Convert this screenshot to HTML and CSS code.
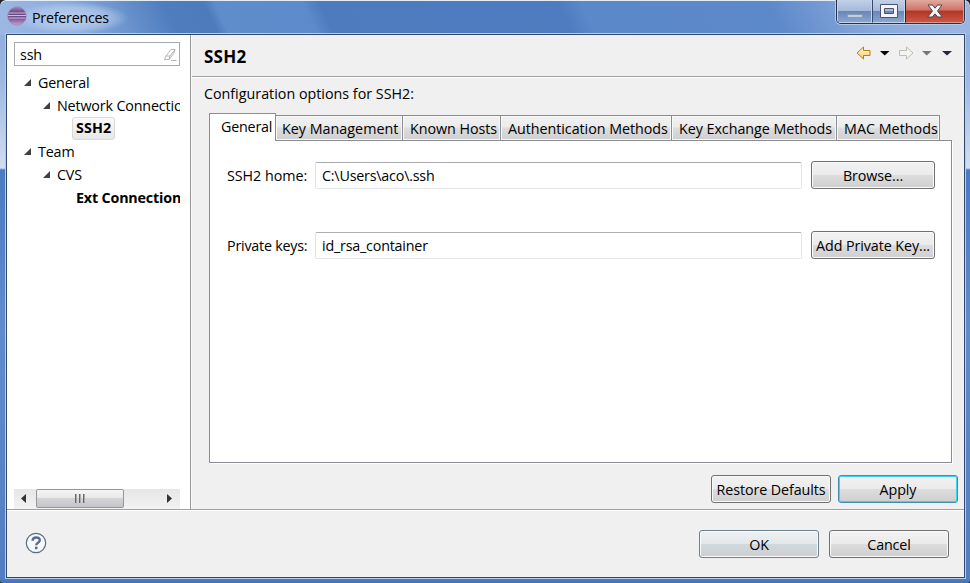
FILE: index.html
```
<!DOCTYPE html>
<html lang="en">
<head>
<meta charset="utf-8">
<title>Preferences</title>
<link rel="stylesheet" href="styles.css">
</head>
<body>
<div class="window">
  <header class="titlebar">
    <svg class="logo" width="20" height="20" viewBox="0 0 20 20"><defs><linearGradient id="orb" x1="0" y1="0" x2="0" y2="1"><stop offset="0" stop-color="#a58bbd"/><stop offset=".3" stop-color="#674785"/><stop offset=".6" stop-color="#704c8e"/><stop offset="1" stop-color="#c4a5d2"/></linearGradient></defs><circle cx="10" cy="10" r="9.200" fill="url(#orb)" stroke="#9c84b5" stroke-width=".7"/><path d="M2 7h16M1 9.500h18M2 12h16" stroke="#d8c8e4" stroke-width=".9"/></svg>
    <span class="title">Preferences</span>
    <div class="controls">
      <span class="ctl min"><svg width="18" height="16" viewBox="0 0 18 16"><rect x="1.500" y="11.500" width="15" height="3" fill="#c3cddd" stroke="#8a9ab5"/></svg></span>
      <span class="ctl max"><svg width="18" height="16" viewBox="0 0 18 16"><path fill-rule="evenodd" d="M.5 1.500h17v13H.5zM4.500 5.500v5h9v-5z" fill="#f4f4f6" stroke="#4b5370"/></svg></span>
      <span class="ctl close"><svg width="18" height="16" viewBox="0 0 18 16"><path d="M2 2h4.500L9 5.200 11.500 2H16L11.500 8l4.800 6h-4.600L9 10.800 6.300 14H1.700l4.800-6z" fill="#f5f5f5" stroke="#4f4550"/></svg></span>
    </div>
  </header>
  <main class="client">
    <div class="upper">
      <aside class="side">
        <div class="search"><span>ssh</span><svg width="16" height="14" viewBox="0 0 16 14"><path d="M2.500 11.500 4 8l5-6.500h4L12 5l-5 6.500zM4 8h4l5-6.500M8 8l-1 3.500M9 12.500h5.500" fill="none" stroke="#b5b5b5"/></svg></div>
        <ul class="tree">
          <li class="l1"><i></i><span>General</span></li>
          <li class="l2"><i></i><span>Network Connectio</span></li>
          <li class="l3"><b class="selected">SSH2</b></li>
          <li class="l1"><i></i><span>Team</span></li>
          <li class="l2"><i></i><span>CVS</span></li>
          <li class="l3"><b class="ext">Ext Connection</b></li>
        </ul>
        <div class="scroll"><i class="left"></i><span class="thumb"><i></i><i></i><i></i></span><i class="right"></i></div>
      </aside>
      <section class="page">
        <div class="pagehead"><h1>SSH2</h1>
          <svg width="98" height="16" viewBox="0 0 98 16"><defs><linearGradient id="gold" x1="0" y1="0" x2="0" y2="1"><stop stop-color="#fffbe0"/><stop offset="1" stop-color="#f3cf63"/></linearGradient></defs><path d="M1 8 7.500 2v3.500h6.500v5H7.500V14z" fill="url(#gold)" stroke="#b97d17"/><path d="M24 6h9.500l-4.750 4.500z" fill="#000"/><path d="M57 8 50.500 2v3.500h-7v5h7V14z" fill="#f4f4f0" stroke="#bdbdb8"/><path d="M66 6h9.500l-4.750 4.500z" fill="#777"/><path d="M86 6h10l-5 4.500z" fill="#26263f"/></svg>
        </div>
        <div class="content">
          <p class="description">Configuration options for SSH2:</p>
          <nav class="tabs">
            <div class="tab active"><span>General</span></div><div class="tab km"><span>Key Management</span></div><div class="tab kh"><span>Known Hosts</span></div><div class="tab am"><span>Authentication Methods</span></div><div class="tab ke"><span>Key Exchange Methods</span></div><div class="tab mm"><span>MAC Methods</span></div>
          </nav>
          <div class="panel">
            <div class="row"><label class="home">SSH2 home:</label><div class="field"><span>C:\Users\aco\.ssh</span></div><div class="btn"><span>Browse...</span></div></div>
            <div class="row"><label class="keys">Private keys:</label><div class="field"><span>id_rsa_container</span></div><div class="btn"><span>Add Private Key...</span></div></div>
          </div>
          <div class="actions"><div class="btn"><span>Restore Defaults</span></div><div class="btn apply"><span>Apply</span></div></div>
        </div>
      </section>
    </div>
    <footer class="footer">
      <svg width="22" height="22" viewBox="0 0 22 22"><circle cx="11" cy="11" r="9.700" fill="#f7f8fa" stroke="#5a6b8c" stroke-width="1.200"/><path d="M7.600 8.800c0-4.300 7.200-4.400 7.200-.6 0 2.600-3.600 2.500-3.600 5" fill="none" stroke="#5a6b8c" stroke-width="2.400"/><rect x="9.900" y="14.700" width="2.600" height="2.500" fill="#5a6b8c"/></svg>
      <div class="dialog-buttons"><div class="btn ok"><span>OK</span></div><div class="btn"><span>Cancel</span></div></div>
    </footer>
  </main>
</div>
</body>
</html>
```
FILE: styles.css
```
* { box-sizing: border-box; }
body { margin: 0; width: 970px; height: 583px; overflow: hidden; background: #20242c; font: 14.3px/20px "Open Sans", "Noto Sans", sans-serif; color: #000; letter-spacing: -.15px; }
span, label, b { white-space: nowrap; }
.window {
  height: 583px; padding: 1px 4px 4px 6px; border-radius: 6px 6px 3px 3px; box-shadow: inset 0 1px #e4ecf7;
  background:
    linear-gradient(#4f7cc1, #4573b8) 0 579px / 100% 4px no-repeat,
    linear-gradient(65deg, #9db8e2 0, #8eadde 70px, #4f7ebf 160px, #4c7aba 198px, #5f8ccb 208px, #5d8aca 288px, #4d7bbe 303px, #4f7cc0 520px, #5b88c9 540px, #5d89ca 710px, #86a6da 790px, #9ab5e1 870px) 0 0 / 100% 35px no-repeat,
    linear-gradient(#88a7da 0, #9db8e2 80px, #d1def0 168px, #4b7ac0 170px, #608cce 330px, #527dc0 583px);
}
.titlebar { height: 33px; display: flex; align-items: center; padding-left: 1px; }
.logo { margin-top: -3px; position: relative; z-index: 1; }
.title { margin: 0 0 0 -15px; padding: 0 20px; height: 32px; line-height: 32px; letter-spacing: -.25px; background: radial-gradient(closest-side, #c4d6f0dd, #b4cbecaa 65%, transparent); }
.controls { margin: -1px 1px 0 auto; align-self: flex-start; display: flex; width: 129px; height: 24px; border: 1px solid #25314d; border-top: 0; border-radius: 0 0 5px 5px; overflow: hidden; box-shadow: 0 0 0 1px #b4cae9; }
.ctl { display: flex; justify-content: center; align-items: center; border: 1px solid #c7d5eb; border-top: 0; background: linear-gradient(#c3d1e7 0, #a5b9da 48%, #6686b7 50%, #8aa5cf); }
.min { width: 35px; } .max { width: 33px; border-left-color: #35486d; } .close { flex: 1; border-left-color: #4d1717; border-right-color: #d99a94; border-bottom-color: #d99a94; background: linear-gradient(#e0a99e, #cf7265 46%, #b33423 50%, #c95846); }
.client { height: 544px; width: 959px; border: 1px solid #2f496f; background: #f0f0f0; box-shadow: 0 0 0 1px #b4cdec; display: flex; flex-direction: column; }
.upper { display: flex; height: 475px; border-bottom: 1px solid #a0a0a0; }
.side { width: 184px; background: #fff; border-right: 1px solid #969696; padding: 7px 10px 0 7px; display: flex; flex-direction: column; overflow: hidden; }
.search { height: 24px; border: 1px solid #a6a8ad; display: flex; align-items: center; justify-content: space-between; padding: 1px 1px 0 5px; flex: none; }
.tree { list-style: none; margin: 5px 0 0; padding: 0; overflow: hidden; }
.tree li { height: 23px; display: flex; align-items: center; white-space: nowrap; }
.tree i { width: 7px; height: 7px; background: #404040; clip-path: polygon(100% 0, 100% 100%, 0 100%); flex: none; margin-right: 7px; }
.l1 { padding-left: 10px; } .l2 { padding-left: 29px; } .l3 { padding-left: 58px; }
.tree .ext { padding-left: 4px; letter-spacing: -.17px; }
.tree .selected { height: 23px; border: 1px solid #d9d9d9; border-radius: 3px; padding: 0 3px; letter-spacing: .1px; background: linear-gradient(#fafafa, #e7e7e7); }
.scroll { margin-top: auto; height: 20px; display: flex; align-items: flex-start; background: linear-gradient(#e6e6e6, #f2f2f2); padding: 0 8px 0 7px; }
.left, .right { width: 5px; height: 9px; margin-top: 5px; background: #333; clip-path: polygon(100% 0, 0 50%, 100% 100%); }
.right { clip-path: polygon(0 0, 100% 50%, 0 100%); margin-left: auto; }
.thumb { width: 88px; height: 19px; margin-left: 10px; border: 1px solid #969696; border-radius: 2px; background: linear-gradient(#f5f5f5, #e8e8ea 46%, #d4d4d7 50%, #c5c5c9); display: flex; align-items: center; justify-content: center; gap: 2px; }
.thumb i { width: 2px; height: 9px; background: linear-gradient(90deg, #666 50%, #aaa 50%); }
.page { flex: 1; border-left: 1px solid #fafafa; }
.pagehead { height: 42px; border-bottom: 1px solid #a0a0a0; display: flex; justify-content: space-between; padding: 0 10px 0 12px; box-shadow: 0 1px #fff; }
h1 { font-size: 17px; line-height: 44px; margin: 0; letter-spacing: .25px; }
.pagehead svg { margin-top: 10px; }
.content { padding: 7px 6px 0 12px; }
.description { margin: 0; height: 29px; letter-spacing: 0; }
.tabs { display: flex; height: 28px; margin-left: 5px; align-items: flex-start; }
.tab { height: 26px; margin-top: 2px; border: 1px solid #898c95; padding-left: 7px; line-height: 25px; letter-spacing: -.04px; background: linear-gradient(#f2f2f2, #ebebeb 46%, #dddddf 50%, #cfcfcf); box-shadow: inset 0 0 0 1px #f8f8f8; margin-left: -1px; }
.tab.active { width: 67px; height: 28px; margin: 0; background: #fff; border-bottom: 0; box-shadow: none; padding-left: 11px; letter-spacing: -.2px; position: relative; z-index: 2; }
.km { width: 128px; padding-left: 6px; letter-spacing: .02px; } .kh { width: 99px; } .am { width: 172px; } .ke { width: 166px; } .mm { width: 104px; letter-spacing: .02px; }
.panel { width: 743px; height: 323px; border: 1px solid #898c95; background: #fff; box-shadow: 1px 1px #fff; margin: -1px 0 0 5px; padding: 20px 16px 0 17px; }
.row { display: flex; height: 28px; margin-bottom: 42px; align-items: center; }
.row label { width: 88px; line-height: 22px; padding-top: 2px; }
.home { letter-spacing: -.04px; } .keys { letter-spacing: -.22px; }
.field { width: 487px; height: 27px; border: 1px solid #e2e5eb; border-top-color: #abadb3; border-radius: 2px; line-height: 26px; padding-left: 6px; margin-right: 9px; letter-spacing: -.2px; }
.btn { width: 120px; height: 28px; border: 1px solid #707070; border-radius: 3px; line-height: 27px; text-align: center; background: linear-gradient(#f2f2f2, #ebebeb 48%, #ddd 50%, #cfcfcf); box-shadow: inset 0 0 0 1px #fafafa; }
.row .btn { width: 124px; letter-spacing: -.08px; }
.actions { display: flex; justify-content: flex-end; gap: 7px; padding-top: 12px; }
.actions .btn { letter-spacing: -.1px; }
.actions .apply { border-color: #3d8fb2; box-shadow: inset 0 0 0 1px #45d0f6; }
.footer { flex: 1; border-top: 1px solid #fff; display: flex; padding: 19px 15px 0 18px; justify-content: space-between; }
.footer > svg { margin-top: 2px; }
.dialog-buttons { display: flex; gap: 10px; }
.ok { border-color: #6e8290; background: linear-gradient(#eef1f2, #e3e8eb 48%, #d2d9dd 50%, #cccfd1); }
```
